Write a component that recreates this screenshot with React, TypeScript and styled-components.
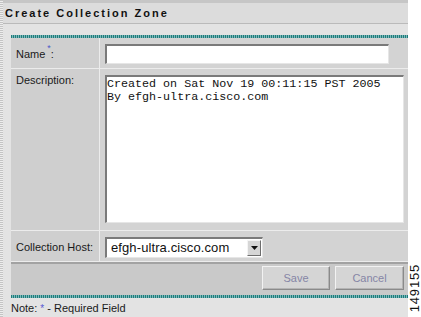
import styled, { createGlobalStyle } from "styled-components";

const GlobalStyle = createGlobalStyle`
  html, body {
    margin: 0;
    padding: 0;
    background: #ffffff;
  }
  body {
    font-family: "Liberation Sans", Arial, sans-serif;
  }
`;

const Page = styled.div`
  display: flex;
  width: 421px;
  height: 317px;
  overflow: hidden;
  background: #ffffff;
`;

const DottedEdge = styled.div`
  width: 3px;
  flex: none;
  background: repeating-linear-gradient(180deg, #c4c4c4 0 1px, #ededed 1px 2px);
`;

const Content = styled.div`
  width: 405px;
  flex: none;
  display: flex;
  flex-direction: column;
  background: #e3e3e3;
`;

const TitleBar = styled.div`
  height: 20px;
  border-top: 3px solid #c6c6c6;
  border-bottom: 1px solid #bababa;
  background: #dcdcdc;
  display: flex;
  align-items: center;
  padding-left: 2px;
`;

const Title = styled.h1`
  margin: 0;
  font-size: 11px;
  font-weight: bold;
  letter-spacing: 2px;
  color: #111111;
`;

const Body = styled.div`
  padding: 11px 0 0 8px;
  display: flex;
  flex-direction: column;
  flex: 1;
`;

const TealLine = styled.div`
  height: 3px;
  background: repeating-linear-gradient(90deg, #1f7b7b 0 1px, #7cb9b9 1px 2px);
`;

const FormGrid = styled.div`
  display: grid;
  grid-template-columns: 88px 1fr;
  grid-template-rows: 30px 161px 30px;
  gap: 1px;
  background: #ececec;
  border-bottom: 1px solid #ececec;
`;

const LabelCell = styled.div<{ $top?: boolean }>`
  background: #cfcfcf;
  display: flex;
  align-items: ${(p) => (p.$top ? "flex-start" : "center")};
  padding: ${(p) => (p.$top ? "5px 0 0 5px" : "2px 0 0 5px")};
  font-size: 11px;
  color: #1a1a1a;
`;

const Required = styled.span`
  position: relative;
  top: -6px;
  font-size: 9px;
  color: #4a5ac8;
  margin: 0 0 0 2px;
`;

const FieldCell = styled.div<{ $top?: boolean }>`
  background: #d3d3d3;
  display: flex;
  align-items: ${(p) => (p.$top ? "flex-start" : "center")};
  padding: ${(p) => (p.$top ? "6px 0 0 5px" : "0 0 0 5px")};
`;

const TextInput = styled.input`
  box-sizing: border-box;
  width: 284px;
  height: 20px;
  margin: 2px 0 0 0;
  padding: 0 3px;
  background: #ffffff;
  border-style: solid;
  border-width: 2px 1px 1px 2px;
  border-color: #7a7a7a #e6e6e6 #e6e6e6 #7a7a7a;
  outline: none;
`;

const TextArea = styled.textarea`
  box-sizing: border-box;
  width: 299px;
  height: 148px;
  margin: 0;
  padding: 1px 0 0 0;
  resize: none;
  overflow: hidden;
  background: #ffffff;
  border-style: solid;
  border-width: 2px 1px 1px 2px;
  border-color: #7a7a7a #e6e6e6 #e6e6e6 #7a7a7a;
  font-family: "Liberation Mono", "Courier New", monospace;
  font-size: 11.7px;
  line-height: 13px;
  color: #111111;
  outline: none;
`;

const SelectBox = styled.div`
  box-sizing: border-box;
  width: 158px;
  height: 21px;
  margin-top: 2px;
  display: flex;
  align-items: center;
  justify-content: space-between;
  background: #ffffff;
  border-style: solid;
  border-width: 2px 1px 1px 2px;
  border-color: #7a7a7a #e6e6e6 #e6e6e6 #7a7a7a;
  padding: 0 1px 0 4px;
`;

const SelectText = styled.span`
  font-size: 13px;
  color: #111111;
  letter-spacing: 0.1px;
`;

const ArrowButton = styled.div`
  box-sizing: border-box;
  width: 14px;
  height: 16px;
  background: #d6d6d6;
  border-style: solid;
  border-width: 1px;
  border-color: #f4f4f4 #6e6e6e #6e6e6e #f4f4f4;
  display: flex;
  align-items: center;
  justify-content: center;
`;

const DarkLine = styled.div`
  height: 2px;
  background: #a2a2a2;
`;

const ButtonBar = styled.div`
  height: 31px;
  box-sizing: border-box;
  background: #c9c9c9;
  display: flex;
  justify-content: flex-end;
  align-items: flex-start;
  gap: 5px;
  padding: 2px 4px 0 0;
`;

const BarButton = styled.button<{ $w: number }>`
  box-sizing: border-box;
  width: ${(p) => p.$w}px;
  height: 24px;
  background: #d5d5d5;
  border-style: solid;
  border-width: 1px;
  border-color: #f2f2f2 #8a8a8a #8a8a8a #f2f2f2;
  box-shadow: inset -1px -1px 0 #b4b4b4;
  font-family: "Liberation Sans", Arial, sans-serif;
  font-size: 11px;
  color: #8585a6;
  padding: 0;
`;

const NoteRow = styled.div`
  padding: 4px 0 0 0;
  font-size: 11px;
  color: #1a1a1a;
`;

const NoteStar = styled.span`
  color: #5a5ad2;
  font-size: 10px;
`;

const Gutter = styled.div`
  flex: 1;
  display: flex;
  flex-direction: column;
  justify-content: flex-end;
  align-items: center;
  padding-bottom: 5px;
`;

const FigureNumber = styled.span`
  writing-mode: vertical-rl;
  transform: rotate(180deg);
  font-family: "Liberation Sans", Arial, sans-serif;
  font-size: 13px;
  letter-spacing: 0.8px;
  color: #111111;
  line-height: 10px;
`;

function App() {
  return (
    <Page>
      <GlobalStyle />
      <DottedEdge />
      <Content>
        <TitleBar>
          <Title>Create Collection Zone</Title>
        </TitleBar>
        <Body>
          <TealLine />
          <FormGrid>
            <LabelCell>
              Name<Required>*</Required>:
            </LabelCell>
            <FieldCell>
              <TextInput type="text" />
            </FieldCell>

            <LabelCell $top>Description:</LabelCell>
            <FieldCell $top>
              <TextArea
                readOnly
                defaultValue={"Created on Sat Nov 19 00:11:15 PST 2005\nBy efgh-ultra.cisco.com"}
              />
            </FieldCell>

            <LabelCell>Collection Host:</LabelCell>
            <FieldCell>
              <SelectBox>
                <SelectText>efgh-ultra.cisco.com</SelectText>
                <ArrowButton>
                  <svg width="7" height="4" viewBox="0 0 7 4">
                    <path d="M0 0 H7 L3.5 4 Z" fill="#111" />
                  </svg>
                </ArrowButton>
              </SelectBox>
            </FieldCell>
          </FormGrid>
          <DarkLine />
          <ButtonBar>
            <BarButton $w={68}>Save</BarButton>
            <BarButton $w={69}>Cancel</BarButton>
          </ButtonBar>
          <TealLine />
          <NoteRow>
            Note: <NoteStar>*</NoteStar> - Required Field
          </NoteRow>
        </Body>
      </Content>
      <Gutter>
        <FigureNumber>149155</FigureNumber>
      </Gutter>
    </Page>
  );
}

export default App;
